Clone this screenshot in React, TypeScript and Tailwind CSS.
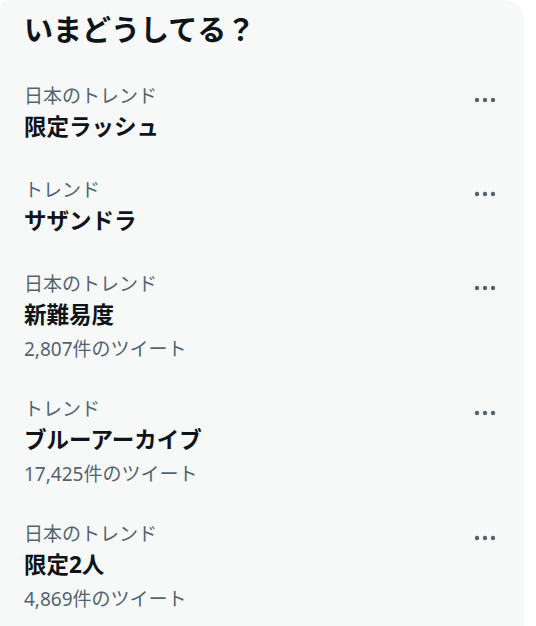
const TRENDS = [
  { meta: "日本のトレンド", title: "限定ラッシュ" },
  { meta: "トレンド", title: "サザンドラ" },
  { meta: "日本のトレンド", title: "新難易度", count: "2,807件のツイート" },
  { meta: "トレンド", title: "ブルーアーカイブ", count: "17,425件のツイート" },
  { meta: "日本のトレンド", title: "限定2人", count: "4,869件のツイート" },
] as const;

const FONT = { fontFamily: '"Noto Sans", "Noto Sans CJK JP", sans-serif' };

function MoreDots() {
  return (
    <svg width="22" height="6" viewBox="0 0 22 6" aria-hidden="true">
      <circle cx="3" cy="3" r="2.2" fill="#536471" />
      <circle cx="11" cy="3" r="2.2" fill="#536471" />
      <circle cx="19" cy="3" r="2.2" fill="#536471" />
    </svg>
  );
}

export default function App() {
  return (
    <div className="min-h-[626px] w-[536px] bg-white" style={FONT}>
      <section className="min-h-[626px] w-[524px] rounded-tl-[8px] rounded-tr-[20px] bg-[#f7f9f9]">
        <h2 className="px-6 pt-[10px] pb-4 text-[29px] leading-[40px] font-bold text-[#0f1419]">
          いまどうしてる？
        </h2>

        <ul>
          {TRENDS.map((t, i) => (
            <li key={i} className="flex items-start justify-between py-4 pl-6 pr-[28px]">
              <div className="flex flex-col">
                <span className="text-[19px] leading-[28px] text-[#536471]">{t.meta}</span>
                <span className="text-[22.5px] leading-[34px] font-bold text-[#0f1419]">{t.title}</span>
                {"count" in t && (
                  <span className="mt-[3px] text-[19px] leading-[28px] text-[#536471]">{t.count}</span>
                )}
              </div>
              <div className="mt-[15px] flex h-[6px] items-center">
                <MoreDots />
              </div>
            </li>
          ))}
        </ul>
      </section>
    </div>
  );
}
